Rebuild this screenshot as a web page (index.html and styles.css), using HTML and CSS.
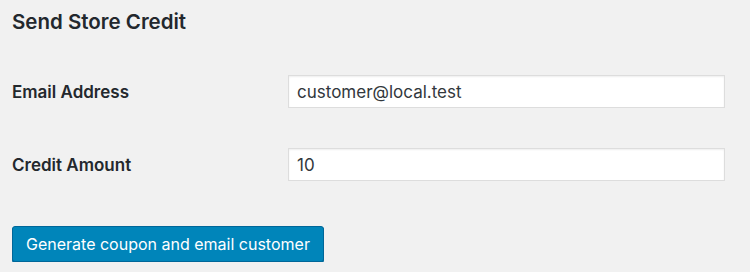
FILE: index.html
```html
<!DOCTYPE html>
<html lang="en">
<head>
    <meta charset="UTF-8">
    <title>Send Store Credit</title>
    <link rel="stylesheet" href="styles.css">
</head>
<body>
    <div class="wrap">
        <h2 class="page-title">Send Store Credit</h2>

        <form class="credit-form">
            <div class="form-row">
                <label for="email">Email Address</label>
                <input type="text" id="email" name="email" value="customer@local.test">
            </div>

            <div class="form-row">
                <label for="amount">Credit Amount</label>
                <input type="text" id="amount" name="amount" value="10">
            </div>

            <button type="submit" class="button-primary">Generate coupon and email customer</button>
        </form>
    </div>
</body>
</html>
```

FILE: styles.css
```css
body {
    font-family: Inter, "Liberation Sans", sans-serif;
    background-color: #f1f1f1;
    color: #23282d;
    margin: 0;
    padding: 0 12px;
}

.page-title {
    font-size: 20.5px;
    font-weight: 600;
    line-height: 26px;
    margin: 0;
    padding: 9px 0 20px;
}

.form-row {
    display: grid;
    grid-template-columns: 276px 437px;
    align-items: center;
    padding: 20px 0;
}

label {
    font-size: 17px;
    font-weight: 600;
}

input[type="text"] {
    height: 33px;
    padding: 0 8px;
    font-family: inherit;
    font-size: 17px;
    color: #32373c;
    background-color: #fff;
    border: 1px solid #ddd;
    box-shadow: inset 0 1px 2px rgba(0, 0, 0, 0.07);
    box-sizing: border-box;
    outline: none;
}

.button-primary {
    margin-top: 25px;
    height: 36px;
    padding: 0 13px;
    font-family: inherit;
    font-size: 16px;
    color: #fff;
    background-color: #0085ba;
    border: 1px solid #006799;
    border-radius: 3px;
    box-shadow: 0 1px 0 #006799;
    cursor: pointer;
}
```
